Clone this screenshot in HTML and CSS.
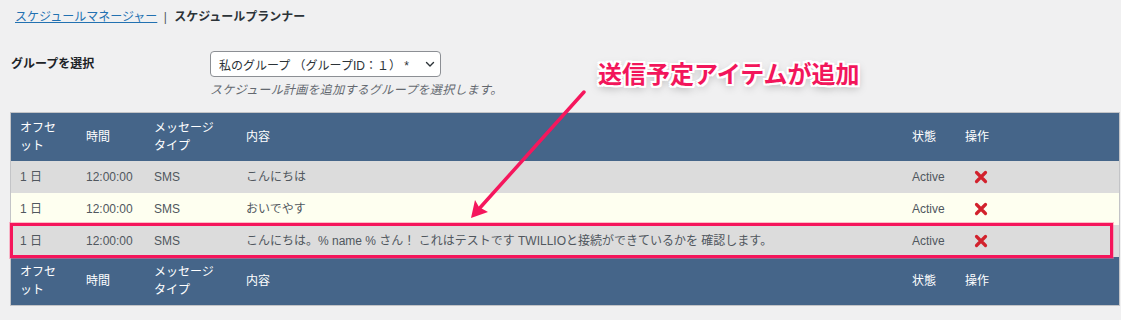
FILE: index.html
```html
<!DOCTYPE html>
<html lang="ja">
<head>
    <meta charset="UTF-8">
    <meta name="viewport" content="width=device-width, initial-scale=1.0">
    <title>スケジュールプランナー</title>
    <link rel="stylesheet" href="styles.css">
</head>
<body>
    <div class="page">
        <div class="breadcrumb">
            <a href="#" class="breadcrumb-link">スケジュールマネージャー</a>
            <span class="breadcrumb-sep">|</span>
            <strong class="breadcrumb-current">スケジュールプランナー</strong>
        </div>

        <div class="form-row">
            <label class="form-label">グループを選択</label>
            <div class="form-field">
                <div class="select-box">
                    <span class="select-text">私のグループ （グループID：１） *</span>
                    <svg class="select-chevron" width="12" height="12" viewBox="0 0 12 12">
                        <path d="M2.5 4.5 L6 8 L9.5 4.5" fill="none" stroke="#2c3338" stroke-width="1.4" stroke-linecap="round" stroke-linejoin="round"/>
                    </svg>
                </div>
                <p class="description">スケジュール計画を追加するグループを選択します。</p>
            </div>
        </div>

        <div class="table-wrap">
            <table class="schedule-table">
                <colgroup>
                    <col class="col-offset">
                    <col class="col-time">
                    <col class="col-type">
                    <col class="col-content">
                    <col class="col-status">
                    <col class="col-action">
                </colgroup>
                <thead>
                    <tr>
                        <th>オフセット</th>
                        <th>時間</th>
                        <th>メッセージタイプ</th>
                        <th>内容</th>
                        <th>状態</th>
                        <th>操作</th>
                    </tr>
                </thead>
                <tbody>
                    <tr class="row-odd">
                        <td>1 日</td>
                        <td>12:00:00</td>
                        <td>SMS</td>
                        <td>こんにちは</td>
                        <td>Active</td>
                        <td><a href="#" class="delete-link"><svg class="delete-icon" width="14" height="14" viewBox="0 0 14 14"><path d="M2.5 2.5 L11.5 11.5 M11.5 2.5 L2.5 11.5" stroke="#d2222d" stroke-width="3.2" stroke-linecap="round"/></svg></a></td>
                    </tr>
                    <tr class="row-even">
                        <td>1 日</td>
                        <td>12:00:00</td>
                        <td>SMS</td>
                        <td>おいでやす</td>
                        <td>Active</td>
                        <td><a href="#" class="delete-link"><svg class="delete-icon" width="14" height="14" viewBox="0 0 14 14"><path d="M2.5 2.5 L11.5 11.5 M11.5 2.5 L2.5 11.5" stroke="#d2222d" stroke-width="3.2" stroke-linecap="round"/></svg></a></td>
                    </tr>
                    <tr class="row-odd">
                        <td>1 日</td>
                        <td>12:00:00</td>
                        <td>SMS</td>
                        <td>こんにちは。% name % さん！ これはテストです TWILLIOと接続ができているかを 確認します。</td>
                        <td>Active</td>
                        <td><a href="#" class="delete-link"><svg class="delete-icon" width="14" height="14" viewBox="0 0 14 14"><path d="M2.5 2.5 L11.5 11.5 M11.5 2.5 L2.5 11.5" stroke="#d2222d" stroke-width="3.2" stroke-linecap="round"/></svg></a></td>
                    </tr>
                </tbody>
                <tfoot>
                    <tr>
                        <th>オフセット</th>
                        <th>時間</th>
                        <th>メッセージタイプ</th>
                        <th>内容</th>
                        <th>状態</th>
                        <th>操作</th>
                    </tr>
                </tfoot>
            </table>
            <div class="highlight-box"></div>
        </div>

        <!-- annotation drawn over the screenshot -->
        <div class="callout">送信予定アイテムが追加</div>
        <svg class="arrow" width="1121" height="320" viewBox="0 0 1121 320">
            <line x1="584" y1="92" x2="478" y2="210" stroke="#f5175d" stroke-width="3.5" stroke-linecap="round"/>
            <polygon points="471,218 475,200 479,207 488,212" fill="#f5175d"/>
        </svg>
    </div>
</body>
</html>
```

FILE: styles.css
```css
html,
body {
    margin: 0;
    padding: 0;
    background-color: #f0f0f1;
}

body {
    font-family: "Liberation Sans", "Noto Sans CJK JP", sans-serif;
    font-size: 12px;
    color: #1d2327;
}

.page {
    position: relative;
    height: 320px;
    overflow: hidden;
    padding: 0 1px 0 10px;
}

.breadcrumb {
    padding: 8px 0 0 5px;
    line-height: 18px;
    font-size: 12px;
}

.breadcrumb-link {
    color: #2271b1;
    text-decoration: underline;
}

.breadcrumb-sep {
    color: #50575e;
    margin: 0 4px 0 3px;
}

.breadcrumb-current {
    font-weight: 700;
    color: #2c3338;
}

.form-row {
    display: grid;
    grid-template-columns: 200px 1fr;
    margin-top: 25px;
}

.form-label {
    font-weight: 700;
    line-height: 26px;
    padding-left: 1px;
    color: #1d2327;
}

.form-field {
    display: flex;
    flex-direction: column;
    align-items: flex-start;
}

.select-box {
    box-sizing: border-box;
    width: 231px;
    height: 26px;
    display: flex;
    align-items: center;
    justify-content: space-between;
    padding: 0 4px 0 8px;
    background-color: #fff;
    border: 1px solid #8c8f94;
    border-radius: 4px;
    color: #2c3338;
}

.select-text {
    white-space: nowrap;
}

.select-chevron {
    display: block;
}

.description {
    margin: 6px 0 0;
    line-height: 14px;
    font-style: italic;
    color: #646970;
    letter-spacing: 0.3px;
}

.table-wrap {
    position: relative;
    margin-top: 15px;
}

.schedule-table {
    width: 1110px;
    table-layout: fixed;
    border-collapse: separate;
    border-spacing: 0;
    border: 1px solid #c3c4c7;
    background-color: #fff;
}

.col-offset { width: 66px; }
.col-time { width: 68px; }
.col-type { width: 92px; }
.col-content { width: 666px; }
.col-status { width: 53px; }
.col-action { width: 163px; }

.schedule-table th {
    background-color: #456589;
    color: #fff;
    font-weight: 400;
    text-align: left;
    line-height: 18px;
    padding: 6px 12px 6px 9px;
    vertical-align: middle;
}

.schedule-table td {
    color: #50575e;
    line-height: 18px;
    padding: 7px 9px;
    white-space: nowrap;
    vertical-align: middle;
}

.row-odd td {
    background-color: #dcdcdc;
}

.row-even td {
    background-color: #fefff0;
}

.delete-link {
    display: inline-block;
    margin-left: 9px;
    vertical-align: -3px;
}

.delete-icon {
    display: block;
}

.highlight-box {
    position: absolute;
    left: 0;
    top: 111px;
    width: 1103px;
    height: 35px;
    box-sizing: border-box;
    border: 3px solid #f5155b;
    box-shadow: 0 0 0 1px rgba(255, 110, 150, 0.45);
    pointer-events: none;
}

.callout {
    position: absolute;
    left: 598px;
    top: 58px;
    font-family: "Noto Sans CJK JP", sans-serif;
    font-size: 24px;
    font-weight: 700;
    line-height: 30px;
    color: #f2165b;
    text-shadow:
        2px 0 0 #fff, -2px 0 0 #fff, 0 2px 0 #fff, 0 -2px 0 #fff,
        2px 2px 0 #fff, -2px -2px 0 #fff, 2px -2px 0 #fff, -2px 2px 0 #fff,
        0 3px 8px rgba(0, 0, 0, 0.35);
}

.arrow {
    position: absolute;
    left: 0;
    top: 0;
    pointer-events: none;
}
```
